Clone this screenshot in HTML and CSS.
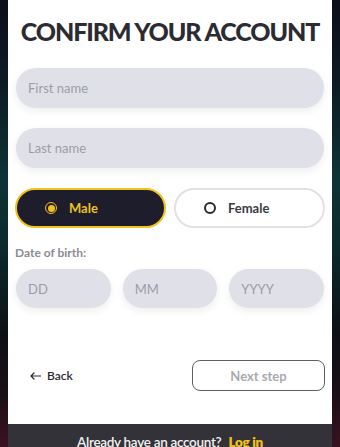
FILE: index.html
```html
<!DOCTYPE html>
<html>
<head>
<meta charset="utf-8">
<link rel="stylesheet" href="styles.css">
</head>
<body>
<div class="frame">
  <div class="card">
    <h1 class="title">CONFIRM YOUR ACCOUNT</h1>
    <div class="field"><span class="ph">First name</span></div>
    <div class="field"><span class="ph">Last name</span></div>
    <div class="gender">
      <div class="opt opt-on"><span class="radio radio-on"><span class="dot"></span></span><span>Male</span></div>
      <div class="opt opt-off"><span class="radio radio-off"></span><span>Female</span></div>
    </div>
    <div class="label">Date of birth:</div>
    <div class="dob">
      <div class="field small"><span class="ph">DD</span></div>
      <div class="field small"><span class="ph">MM</span></div>
      <div class="field small"><span class="ph">YYYY</span></div>
    </div>
    <div class="actions">
      <div class="back">
        <svg width="11" height="8" viewBox="0 0 11 8"><path d="M10.5 4H1.2M4 1L1 4l3 3" fill="none" stroke="#2a2a30" stroke-width="1.2" stroke-linecap="round" stroke-linejoin="round"/></svg>
        <span>Back</span>
      </div>
      <div class="next">Next step</div>
    </div>
  </div>
  <div class="footer">Already have an account? <span class="login">Log in</span></div>
</div>
</body>
</html>
```
FILE: styles.css
```css
html, body {
  margin: 0;
  padding: 0;
}
body {
  width: 340px;
  height: 447px;
  overflow: hidden;
  background: linear-gradient(180deg, #0b0f1a 0%, #0d1a24 18%, #0c3436 40%, #0b2a2c 55%, #0d1016 75%, #1a0f16 88%, #3a1220 100%);
  font-family: Lato, "Noto Sans", sans-serif;
}
.frame {
  margin: 0 8px;
  display: flex;
  flex-direction: column;
}
.card {
  background: #ffffff;
  height: 424px;
  box-sizing: border-box;
  padding: 16px 8px 0 8px;
  display: flex;
  flex-direction: column;
}
.title {
  margin: 0 -8px 22px;
  font-size: 25px;
  line-height: 30px;
  font-weight: 900;
  letter-spacing: -1.1px;
  color: #2b2b31;
  text-align: center;
}
.field {
  height: 40px;
  border-radius: 20px;
  background: #e0e1e8;
  box-shadow: 0 3px 8px rgba(0, 0, 0, 0.07), 0 0 0 1px rgba(255, 255, 255, 0.9);
  display: flex;
  align-items: center;
  padding-left: 12px;
  margin-bottom: 20px;
}
.ph {
  font-size: 13px;
  color: #9c9ca8;
}
.gender {
  display: grid;
  grid-template-columns: 1fr 1fr;
  gap: 8px;
  margin: 0 -1px;
}
.opt {
  height: 40px;
  box-sizing: border-box;
  border-radius: 20px;
  display: flex;
  align-items: center;
  padding-left: 28px;
  gap: 12px;
  font-size: 13px;
  font-weight: 700;
}
.opt-on {
  background: #1d1d2b;
  border: 2px solid #f2c21c;
  color: #eec022;
}
.opt-off {
  background: #ffffff;
  border: 2px solid #e2e2e4;
  color: #3a3a40;
}
.radio {
  width: 12px;
  height: 12px;
  box-sizing: border-box;
  border-radius: 50%;
  display: flex;
  align-items: center;
  justify-content: center;
}
.radio-on {
  border: 1.5px solid #f2c21c;
}
.dot {
  width: 7px;
  height: 7px;
  border-radius: 50%;
  background: #f2c21c;
}
.radio-off {
  border: 2px solid #2a2a30;
}
.label {
  margin: 17px 0 9px -1px;
  font-size: 12px;
  line-height: 15px;
  font-weight: 700;
  color: #8c8c92;
}
.dob {
  display: grid;
  grid-template-columns: 1fr 1fr 1fr;
  gap: 12px;
}
.dob .field {
  height: 39px;
}
.actions {
  margin-top: 32px;
  display: flex;
  justify-content: space-between;
  align-items: center;
}
.back {
  display: flex;
  align-items: center;
  gap: 6px;
  padding-left: 14px;
  font-size: 12px;
  font-weight: 600;
  color: #2a2a30;
}
.next {
  width: 133px;
  height: 31px;
  box-sizing: border-box;
  border: 1.5px solid #5e5e64;
  border-radius: 8px;
  display: flex;
  align-items: center;
  justify-content: center;
  font-size: 13px;
  font-weight: 700;
  color: #a9a9b0;
  margin-right: -1px;
}
.footer {
  background: #333238;
  height: 13px;
  padding-top: 10px;
  box-sizing: content-box;
  text-align: center;
  font-size: 13.5px;
  line-height: 16px;
  font-weight: 600;
  color: #f2f2f2;
  letter-spacing: -0.3px;
}
.login {
  color: #f2c21c;
  font-weight: 800;
  margin-left: 4px;
}
```
